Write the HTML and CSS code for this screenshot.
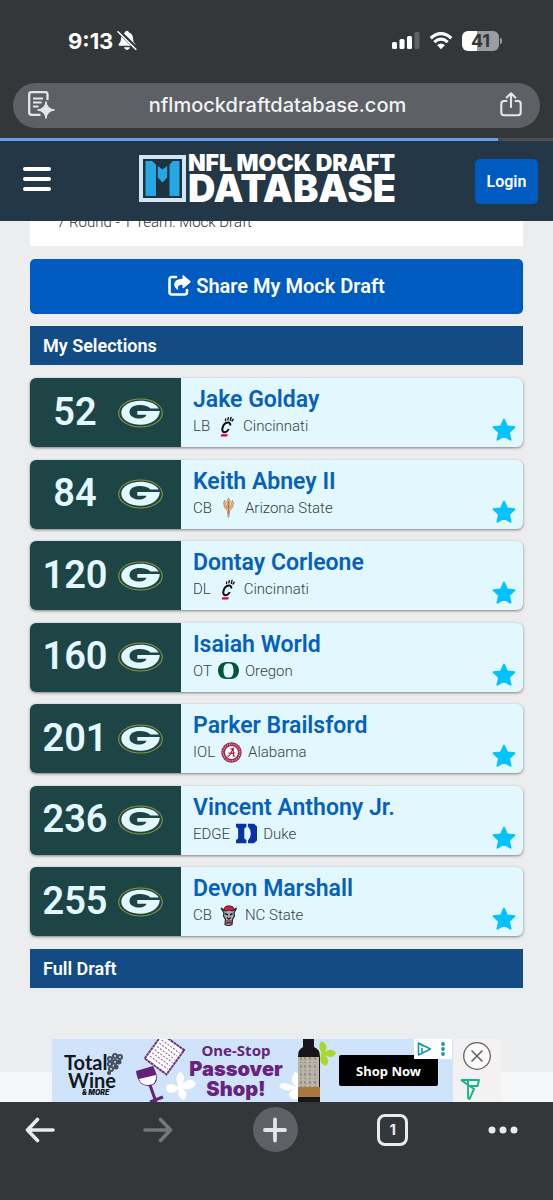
FILE: index.html
```html
<!DOCTYPE html>
<html lang="en">
<head>
<meta charset="utf-8">
<meta name="viewport" content="width=device-width, initial-scale=1">
<title>NFL Mock Draft Database</title>
<link rel="stylesheet" href="styles.css">
</head>
<body>
<svg class="defs" aria-hidden="true">
  <symbol id="packers" viewBox="0 0 45 30">
    <ellipse cx="22.500" cy="15" rx="21.800" ry="14" fill="#1d4545" stroke="#8d963b" stroke-width="1.100"/>
    <path d="M39.500 8.800C36.500 5 30 2.700 22.500 2.700C11.500 2.700 3.300 8 3.300 14.700C3.300 21.500 11.500 26.700 22.500 26.700C33 26.700 41.300 21.500 41.800 13H19.300V16.800H28.500C27.500 19.300 25 20.500 22 20.500C15.800 20.500 11.500 18 11.500 13.900C11.500 9.700 16 7 22 7C26.500 7 30.500 8.200 32.500 10.500H40.800C40.500 10 40 9.400 39.500 8.800Z" fill="#e3f7ff"/>
  </symbol>
  <symbol id="star" viewBox="0 0 24 24">
    <path d="M12 1.600L15 8.400L22.400 9.200L16.900 14.200L18.500 21.700L12 18L5.500 21.700L7.100 14.200L1.600 9.200L9 8.400Z" fill="#00c3ff" stroke="#00c3ff" stroke-width="2" stroke-linejoin="round"/>
  </symbol>
  <symbol id="cincinnati" viewBox="0 0 21 21">
    <path d="M14.300 9.500Q14.500 6.500 12 6.400Q9 6.300 7.200 9.800Q5.600 13.500 6.800 15.300Q8 16.900 10.500 15.700Q12 14.800 12.700 13" fill="none" stroke="#111" stroke-width="2"/>
    <path d="M14.300 4.200L15 1.500M11.800 3.800L12.300 1.800M16 5L17.300 3.200M9.500 4.500L9.700 3" stroke="#111" stroke-width="1.400" stroke-linecap="round"/>
    <path d="M5.300 18.300H11.800L11.200 20.500H4.700Z" fill="#e00034"/>
  </symbol>
  <symbol id="arizona" viewBox="0 0 21 21">
    <path d="M10.500.8L8.900 4L9.600 11L8.200 9L6.700 3L5.500 6L6.700 11L9.300 13.500L10 20L10.500 20.500L11 20L11.700 13.500L14.300 11L15.500 6L14.300 3L12.800 9L11.400 11L12.100 4Z" fill="#e9b868" stroke="#a8604a" stroke-width=".5"/>
    <path d="M10.500 4V17" stroke="#a24145" stroke-width=".6"/>
  </symbol>
  <symbol id="oregon" viewBox="0 0 21 21">
    <path fill-rule="evenodd" d="M8.500 2H12.500C17.500 2 21 5.500 21 10.500C21 15.500 17.500 19 12.500 19H8.500C3.500 19 0 15.500 0 10.500C0 5.500 3.500 2 8.500 2ZM9 3.500C6.500 3.800 5.500 7 5.500 10.500C5.500 14 6.500 17.200 9 17.500H12C14.500 17.200 15.500 14 15.500 10.500C15.500 7 14.500 3.800 12 3.500Z" fill="#00573c"/>
  </symbol>
  <symbol id="alabama" viewBox="0 0 21 21">
    <circle cx="10.500" cy="10.500" r="10.200" fill="#9e2b4c"/>
    <circle cx="10.500" cy="10.500" r="8.400" fill="none" stroke="#d3a0b0" stroke-width="1.300" stroke-dasharray="1.200 1.100"/>
    <circle cx="10.500" cy="10.500" r="6.500" fill="#fff"/>
    <path d="M6.300 13.800Q7.500 14.800 8.900 13Q11 9 12.200 6.600L12.700 14H14.300M11.500 14H13.300M7.500 10.800Q10 12 13.800 10.800M9.600 7.400Q10.500 6.300 12.300 6.600" fill="none" stroke="#9e1b40" stroke-width="1.100"/>
  </symbol>
  <symbol id="duke" viewBox="0 0 21 21">
    <path d="M0 .8H10.400V4L8.300 5.500V15.500L10.400 17V20.200H0V17L2.100 15.500V5.500L0 4ZM12 .8H18L21 3.500V17.500L18 20.200H12V17.500Q14.800 14.500 14.800 10.500Q14.800 6.500 12 3.500Z" fill="#0736a4"/>
  </symbol>
  <symbol id="ncstate" viewBox="0 0 21 21">
    <path d="M3 3L6 8L5.500 11L7.500 14.500L7 19.500L10.500 20.800L14 19.500L14.500 14.500L16.500 11L16 8L18.500 3L15 5.500L12 4.500L6.500 5.500Z" fill="#a9adb2" stroke="#20242a" stroke-width="1.200"/>
    <path d="M6 5Q6 .8 11 .8Q15.500 .8 16 4L14.500 6Q11 4 7.500 6.200Z" fill="#d81f35" stroke="#20242a" stroke-width=".8"/>
    <path d="M7 8.500L10 10M14.500 8.500L12 10M9 12.500L10.800 14L12.800 12.500" fill="none" stroke="#20242a" stroke-width="1.500"/>
    <path d="M7.800 16H14" stroke="#c8283a" stroke-width="1.500"/>
    <path d="M8 17.800H13.700" stroke="#20242a" stroke-width="1.300"/>
  </symbol>
</svg>

<div class="browser-top">
  <div class="status">
    <div class="clock"><span>9:13</span>
      <svg width="20" height="21" viewBox="0 0 20 21" aria-label="Silent"><path d="M10 .8Q11.700 .8 11.900 2.400Q16 3.700 16 8.400Q16 12.500 18.400 14.200Q19 15.800 17.600 15.800H2.400Q1 15.800 1.600 14.200Q4 12.500 4 8.400Q4 3.700 8.100 2.400Q8.300 .8 10 .8ZM7 17.300H13Q12.500 20 10 20Q7.500 20 7 17.300Z" fill="#fff"/><path d="M2 1.500L19.500 18.500" stroke="#33373a" stroke-width="4"/><path d="M1 1.800L18.800 19.200" stroke="#fff" stroke-width="1.600" stroke-linecap="round"/></svg>
    </div>
    <div class="signals">
      <svg width="28" height="18" viewBox="0 0 28 18" aria-label="Signal"><g fill="#fff"><rect y="10" width="5" height="7" rx="1.500"/><rect x="7.500" y="7" width="5" height="10" rx="1.500"/><rect x="15" y="4" width="5" height="13" rx="1.500"/></g><rect x="22.500" width="5" height="17" rx="1.500" fill="#606366"/></svg>
      <svg width="24" height="18" viewBox="0 0 24 18" aria-label="Wi-Fi"><path d="M1.700 6.200Q12-3 22.300 6.200M5.300 10.100Q12 4.300 18.700 10.100" fill="none" stroke="#fff" stroke-width="3.200"/><path d="M8 13Q12 9.800 16 13L12 17.300Z" fill="#fff"/></svg>
      <div class="battery">41</div>
    </div>
  </div>
  <div class="address">
    <button class="plain" aria-label="Page tools"><svg width="28" height="28" viewBox="0 0 28 28" fill="none" stroke="#e4e6ec" stroke-width="2.300"><path d="M20.500 9V3.500Q20.500 1.200 18.200 1.200H4.500Q2.200 1.200 2.200 3.500V21.500Q2.200 23.800 4.500 23.800H13.500"/><path d="M6 7.500H16M6 11.500H14.500M6 15.500H11.500" stroke-width="1.800"/><path d="M19 10.500Q20 18 27.500 19Q20 20 19 27.500Q18 20 10.500 19Q18 18 19 10.500Z" fill="#e4e6ec" stroke="#e4e6ec" stroke-width="1"/></svg></button>
    <span class="url">nflmockdraftdatabase.com</span>
    <button class="plain" aria-label="Share page"><svg width="22" height="25" viewBox="0 0 22 25" fill="none" stroke="#e4e6ec" stroke-width="2.100" stroke-linecap="round" stroke-linejoin="round"><path d="M6.500 9H4Q1.300 9 1.300 11.700V20.500Q1.300 23.200 4 23.200H18Q20.700 23.200 20.700 20.500V11.700Q20.700 9 18 9H15.500M11 15V1.500M6.700 5.500L11 1.300L15.300 5.500"/></svg></button>
  </div>
  <div class="progress"><div class="progress-fill"></div></div>
</div>

<header class="site-header">
  <button class="menu" aria-label="Menu"><span></span><span></span><span></span></button>
  <a class="brand" href="#">
    <svg width="47" height="47" viewBox="0 0 47 47" aria-hidden="true"><rect x="2" y="2" width="43" height="43" fill="#20313f" stroke="#d3e4f2" stroke-width="4"/><path d="M6.500 6H13L17 9.500V41H6.500ZM40.500 6H34L30.500 9.500V41H40.500ZM18.800 11L23.500 14.500L28.200 11V22.500L23.500 27.500L18.800 22.500Z" fill="#25a8e3"/></svg>
    <span class="brand-text"><span class="brand-small">NFL MOCK DRAFT</span><span class="brand-large">DATABASE</span></span>
  </a>
  <button class="login">Login</button>
</header>

<main>
  <p class="summary">7 Round - 1 Team: Mock Draft</p>
  <button class="share"><svg width="23" height="21" viewBox="0 0 23 21" aria-hidden="true"><path d="M8 2H4Q1.500 2 1.500 4.500V17Q1.500 19.500 4 19.500H16.500Q19 19.500 19 17V15" fill="none" stroke="#fff" stroke-width="2.600" stroke-linecap="round"/><path d="M14.500.5Q15-.2 15.800.4L22.300 6Q23 6.700 22.300 7.400L15.800 13Q14.500 13.500 14.500 12.400V9.800Q8.500 9.400 10.300 15.200Q5.500 12.500 6.300 8.500Q7.300 4 14.500 3.700Z" fill="#fff"/></svg>Share My Mock Draft</button>
  <h2>My Selections</h2>
  <ol class="picks">
    <li class="pick"><div class="slot"><span class="num">52</span><svg class="team"><use href="#packers"/></svg></div><div class="info"><a href="#" class="name">Jake Golday</a><div class="meta"><span>LB</span><svg class="school"><use href="#cincinnati"/></svg><span class="college">Cincinnati</span></div><svg class="star"><use href="#star"/></svg></div></li>
    <li class="pick"><div class="slot"><span class="num">84</span><svg class="team"><use href="#packers"/></svg></div><div class="info"><a href="#" class="name">Keith Abney II</a><div class="meta"><span>CB</span><svg class="school"><use href="#arizona"/></svg><span class="college">Arizona State</span></div><svg class="star"><use href="#star"/></svg></div></li>
    <li class="pick"><div class="slot"><span class="num">120</span><svg class="team"><use href="#packers"/></svg></div><div class="info"><a href="#" class="name">Dontay Corleone</a><div class="meta"><span>DL</span><svg class="school"><use href="#cincinnati"/></svg><span class="college">Cincinnati</span></div><svg class="star"><use href="#star"/></svg></div></li>
    <li class="pick"><div class="slot"><span class="num">160</span><svg class="team"><use href="#packers"/></svg></div><div class="info"><a href="#" class="name">Isaiah World</a><div class="meta"><span>OT</span><svg class="school"><use href="#oregon"/></svg><span class="college">Oregon</span></div><svg class="star"><use href="#star"/></svg></div></li>
    <li class="pick"><div class="slot"><span class="num">201</span><svg class="team"><use href="#packers"/></svg></div><div class="info"><a href="#" class="name">Parker Brailsford</a><div class="meta"><span>IOL</span><svg class="school"><use href="#alabama"/></svg><span class="college">Alabama</span></div><svg class="star"><use href="#star"/></svg></div></li>
    <li class="pick"><div class="slot"><span class="num">236</span><svg class="team"><use href="#packers"/></svg></div><div class="info"><a href="#" class="name">Vincent Anthony Jr.</a><div class="meta"><span>EDGE</span><svg class="school"><use href="#duke"/></svg><span class="college">Duke</span></div><svg class="star"><use href="#star"/></svg></div></li>
    <li class="pick"><div class="slot"><span class="num">255</span><svg class="team"><use href="#packers"/></svg></div><div class="info"><a href="#" class="name">Devon Marshall</a><div class="meta"><span>CB</span><svg class="school"><use href="#ncstate"/></svg><span class="college">NC State</span></div><svg class="star"><use href="#star"/></svg></div></li>
  </ol>
  <h2>Full Draft</h2>
</main>

<aside class="ad-strip" aria-label="Advertisement">
  <div class="ad">
    <svg class="ad-art" width="401" height="63" viewBox="0 0 401 63" aria-hidden="true">
      <g fill="#444f5c"><circle cx="58" cy="20" r="3"/><circle cx="63" cy="17" r="3"/><circle cx="68" cy="18" r="3"/><circle cx="58" cy="25" r="3"/><circle cx="63" cy="23" r="3"/><circle cx="67" cy="23" r="2.500"/><circle cx="59" cy="30" r="3"/><circle cx="64" cy="28" r="2.500"/><circle cx="57" cy="34" r="2"/></g>
      <g fill="#abbfd2"><circle cx="58" cy="20" r="1.200"/><circle cx="63" cy="17" r="1.200"/><circle cx="68" cy="18" r="1.200"/><circle cx="58" cy="25" r="1.200"/><circle cx="63" cy="23" r="1.200"/><circle cx="59" cy="30" r="1.200"/></g>
      <g transform="rotate(36 112 15)"><rect x="99" y="0" width="27" height="30" fill="#fff" stroke="#713481" stroke-width="2" stroke-dasharray="3 .5"/><path d="M102 5h22M102 9h22M102 13h22M102 17h22M102 21h22M102 25h22" stroke="#8a5897" stroke-width="1" stroke-dasharray="2 1.500"/></g>
      <path d="M84 32L101 27Q110 44 98 47Q86 48 84 32Z" fill="#652278"/><path d="M87 40L104 36Q105 46 96 46Q89 46 87 40Z" fill="#fff"/><path d="M98 46L104 63M98 63L111 58" stroke="#652278" stroke-width="3"/>
      <g fill="#fff"><path d="M127 48Q121 38 128 33Q136 37 129 47Q137 36 144 44Q140 53 130 49Q138 55 132 61Q124 58 127 50Q117 58 114 50Q114 41 127 48Z"/><path d="M244 48Q236 41 243 33Q252 37 246 48V60Q237 62 237 54L244 49Q234 55 227 47Q230 41 244 48Z"/></g>
      <path d="M269 13Q265 5 270 2Q277 6 273 13Q280 8 284 14Q281 21 273 16Q279 22 274 27Q266 24 269 16Z" fill="#a7d82b"/>
      <path d="M251 0H262V8Q268 10 268 18V63H246V18Q246 10 251 8Z" fill="#19161a"/><rect x="246" y="18" width="21" height="31" fill="#b8b4a8"/><path d="M249 18V49M253 18V49M258 18V49M263 18V49" stroke="#8d877b" stroke-width="1.500" stroke-dasharray="3 2 1 2"/><rect x="246" y="48" width="22" height="10" fill="#a8793c"/>
    </svg>
    <div class="wine"><span>Total</span><span>Wine</span><small>&amp; MORE</small></div>
    <div class="promo"><span>One-Stop</span><b>Passover</b><b>Shop!</b></div>
    <button class="shop">Shop Now</button>
    <div class="choices"><svg width="32" height="16" viewBox="0 0 32 16"><path d="M1.500 2L13.500 8L1.500 14ZM5 7V12M5 4V5.500" fill="none" stroke="#1697b5" stroke-width="1.600" stroke-linejoin="round"/><g fill="#1697b5"><circle cx="26" cy="3" r="1.900"/><circle cx="26" cy="8" r="1.900"/><circle cx="26" cy="13" r="1.900"/></g></svg></div>
  </div>
  <div class="ad-side">
    <button class="plain" aria-label="Close ad"><svg width="28" height="28" viewBox="0 0 28 28" fill="none" stroke="#626262" stroke-width="1.300"><circle cx="14" cy="14" r="13.300" fill="#fbf9f9"/><path d="M8.500 8.500L19.500 19.500M19.500 8.500L8.500 19.500" stroke-width="1.600"/></svg></button>
    <svg class="green-mark" width="20" height="21" viewBox="0 0 20 21" fill="none" stroke="#11b784" stroke-width="1.900" stroke-linejoin="round"><path d="M1 1H19L17.500 7H10M1 1L14 10L9.500 20L8 19V6M8 1V6"/></svg>
  </div>
</aside>

<nav class="browser-nav" aria-label="Browser">
  <button class="plain back" aria-label="Back"><svg width="30" height="26" viewBox="0 0 30 26" fill="none" stroke="#e8eaed" stroke-width="3.600" stroke-linecap="round" stroke-linejoin="round"><path d="M28 13H2.500M12.500 2.500L2.500 13L12.500 23.500"/></svg></button>
  <button class="plain" aria-label="Forward"><svg width="30" height="26" viewBox="0 0 30 26" fill="none" stroke="#74777a" stroke-width="3.600" stroke-linecap="round" stroke-linejoin="round"><path d="M2 13H27.500M17.500 2.500L27.500 13L17.500 23.500"/></svg></button>
  <button class="new-tab" aria-label="New tab"><svg width="24" height="26" viewBox="0 0 24 26" stroke="#e4e6ec" stroke-width="3.800" stroke-linecap="round"><path d="M12 2.500V23.500M2 13H22"/></svg></button>
  <button class="tabs" aria-label="Open tabs">1</button>
  <button class="plain" aria-label="More"><svg width="30" height="8" viewBox="0 0 30 8" fill="#e8eaed"><circle cx="4" cy="4" r="3.500"/><circle cx="15" cy="4" r="3.500"/><circle cx="26" cy="4" r="3.500"/></svg></button>
</nav>
</body>
</html>
```
FILE: styles.css
```css
* { box-sizing: border-box; }
body {
  margin: 0;
  height: 100vh;
  display: flex;
  flex-direction: column;
  overflow: hidden;
  background: #ecedef;
  font-family: Roboto, "Liberation Sans", sans-serif;
}
button { font-family: inherit; border: 0; padding: 0; }
a { text-decoration: none; }
svg { display: block; flex: none; }
.defs { position: absolute; width: 0; height: 0; }
.plain { background: none; display: flex; }

.browser-top { background: #33373a; flex: none; }
.status {
  height: 83px;
  padding: 0 54px 2px 68px;
  display: flex;
  align-items: center;
  justify-content: space-between;
  color: #fff;
  font: 700 22px/26px Inter, sans-serif;
}
.clock { display: flex; align-items: center; gap: 4px; }
.signals { display: flex; align-items: center; gap: 9px; }
.battery {
  position: relative;
  width: 37px;
  height: 20px;
  border-radius: 6px;
  background: linear-gradient(90deg, #fff 41%, #9b9da0 41%);
  color: #33373a;
  font-size: 18px;
  line-height: 20px;
  text-align: center;
}
.battery::after {
  content: "";
  position: absolute;
  right: -3px;
  top: 7px;
  width: 2px;
  height: 6px;
  border-radius: 0 2px 2px 0;
  background: #9b9da0;
}
.address {
  margin: 0 13px 10px;
  height: 45px;
  padding: 0 18px 2px 14px;
  border-radius: 23px;
  background: #5d6165;
  display: flex;
  align-items: center;
  justify-content: space-between;
}
.url { color: #f1f2f4; font: 500 20px/26px Inter, sans-serif; }
.progress { height: 3px; background: #4b4d50; }
.progress-fill { width: 90%; height: 100%; background: #6c9fe6; }

.site-header {
  flex: none;
  height: 80px;
  padding: 0 15px 0 23px;
  background: #243746;
  display: flex;
  align-items: center;
  justify-content: space-between;
  z-index: 1;
}
.menu {
  width: 28px;
  margin-bottom: 4px;
  background: none;
  display: flex;
  flex-direction: column;
  gap: 6px;
}
.menu span { height: 4px; border-radius: 2px; background: #fff; }
.brand { display: flex; align-items: center; gap: 2px; margin: 0 0 6px 9px; color: #fff; }
.brand-text { display: flex; flex-direction: column; font-family: Inter, sans-serif; font-weight: 900; }
.brand-small { font-size: 23px; line-height: 19px; }
.brand-large { font-size: 38px; line-height: 30px; }
.login {
  width: 63px;
  height: 45px;
  border-radius: 5px;
  background: #005bc0;
  color: #fff;
  font-size: 16px;
  font-weight: 600;
}

main {
  flex: 1;
  min-height: 0;
  padding: 0 30px;
  display: flex;
  flex-direction: column;
}
.summary {
  margin: -14px 0 13px;
  padding: 5px 27px 14px;
  background: #fff;
  color: #2d3235;
  font-size: 15px;
  line-height: 20px;
  font-weight: 300;
}
.share {
  flex: none;
  height: 55px;
  padding-bottom: 2px;
  margin-bottom: 12px;
  border-radius: 5px;
  background: #005bc0;
  color: #fff;
  display: flex;
  align-items: center;
  justify-content: center;
  gap: 5px;
  font-size: 20px;
  font-weight: 600;
}
h2 {
  flex: none;
  margin: 0;
  padding: 0 13px;
  background: #134b84;
  color: #fff;
  font-size: 18px;
  line-height: 39px;
  font-weight: 600;
}
.picks {
  flex: 1;
  margin: 0;
  padding: 13px 0;
  list-style: none;
  display: flex;
  flex-direction: column;
  justify-content: space-between;
}
.pick {
  display: flex;
  height: 69px;
  border-radius: 6px;
  overflow: hidden;
  background: #e3f7ff;
  box-shadow: 0 1px 3px #0007;
}
.slot {
  width: 151px;
  padding: 0 18px 0 2px;
  background: #1d4545;
  display: flex;
  align-items: center;
}
.num { flex: 1; padding-bottom: 2px; text-align: center; color: #e3f7ff; font-size: 38px; line-height: 46px; font-weight: 600; }
.team { width: 45px; height: 30px; }
.info { position: relative; flex: 1; padding: 8px 12px; }
.name { display: block; color: #0660be; font-size: 23px; line-height: 27px; font-weight: 600; }
.meta { display: flex; align-items: center; gap: 6px; color: #333f48; font-size: 15px; line-height: 26px; font-weight: 300; }
.school { width: 21px; height: 21px; }
.star { position: absolute; right: 7px; bottom: 5px; width: 24px; height: 24px; }

.ad-strip {
  flex: none;
  height: 114px;
  padding: 51px 52px 0;
  background: linear-gradient(#ecedef 84px, #f5f6f8 84px);
  display: flex;
}
.ad {
  position: relative;
  width: 401px;
  height: 63px;
  padding-right: 15px;
  background: #cfe3fb;
  display: flex;
  overflow: hidden;
}
.ad-art { position: absolute; left: 0; top: 0; }
.wine {
  position: relative;
  width: 62px;
  padding: 14px 0 0 12px;
  color: #12181e;
  display: flex;
  flex-direction: column;
  font: 700 20px/18px Lato, sans-serif;
}
.wine small { padding-left: 18px; font: italic 900 7px/8px Inter, sans-serif; }
.wine span + span { padding-left: 4px; }
.promo {
  position: relative;
  width: 120px;
  margin-left: 62px;
  padding-top: 2px;
  display: flex;
  flex-direction: column;
  align-items: center;
  color: #67237d;
  font: 700 15px/18px "Noto Sans", sans-serif;
}
.promo b { font: 900 20px/20px Inter, sans-serif; }
.shop {
  position: relative;
  width: 99px;
  height: 31px;
  margin: 16px 0 0 auto;
  border-radius: 2px;
  background: #000;
  color: #fff;
  font: 700 13px/20px "Noto Sans", sans-serif;
}
.choices { position: absolute; right: 1px; top: 0; width: 38px; height: 20px; padding: 2px 3px; background: #fff; }
.ad-side {
  width: 48px;
  padding-top: 3px;
  background: #f3f1f1;
  display: flex;
  flex-direction: column;
  align-items: center;
  gap: 9px;
}
.green-mark { align-self: flex-start; margin-left: 7px; }

.browser-nav {
  flex: none;
  height: 98px;
  padding: 5px 35px 0 25px;
  background: #33373a;
  display: flex;
  align-items: flex-start;
  justify-content: space-between;
}
.browser-nav .plain { height: 46px; align-items: center; }
.browser-nav .back { margin-right: 8px; }
.new-tab {
  width: 45px;
  height: 45px;
  border-radius: 50%;
  background: #5d6165;
  display: flex;
  align-items: center;
  justify-content: center;
}
.tabs {
  width: 31px;
  height: 32px;
  margin-top: 7px;
  border: 3px solid #e8eaed;
  border-radius: 8px;
  background: none;
  color: #e8eaed;
  font: 700 15px/20px Inter, sans-serif;
}
```
